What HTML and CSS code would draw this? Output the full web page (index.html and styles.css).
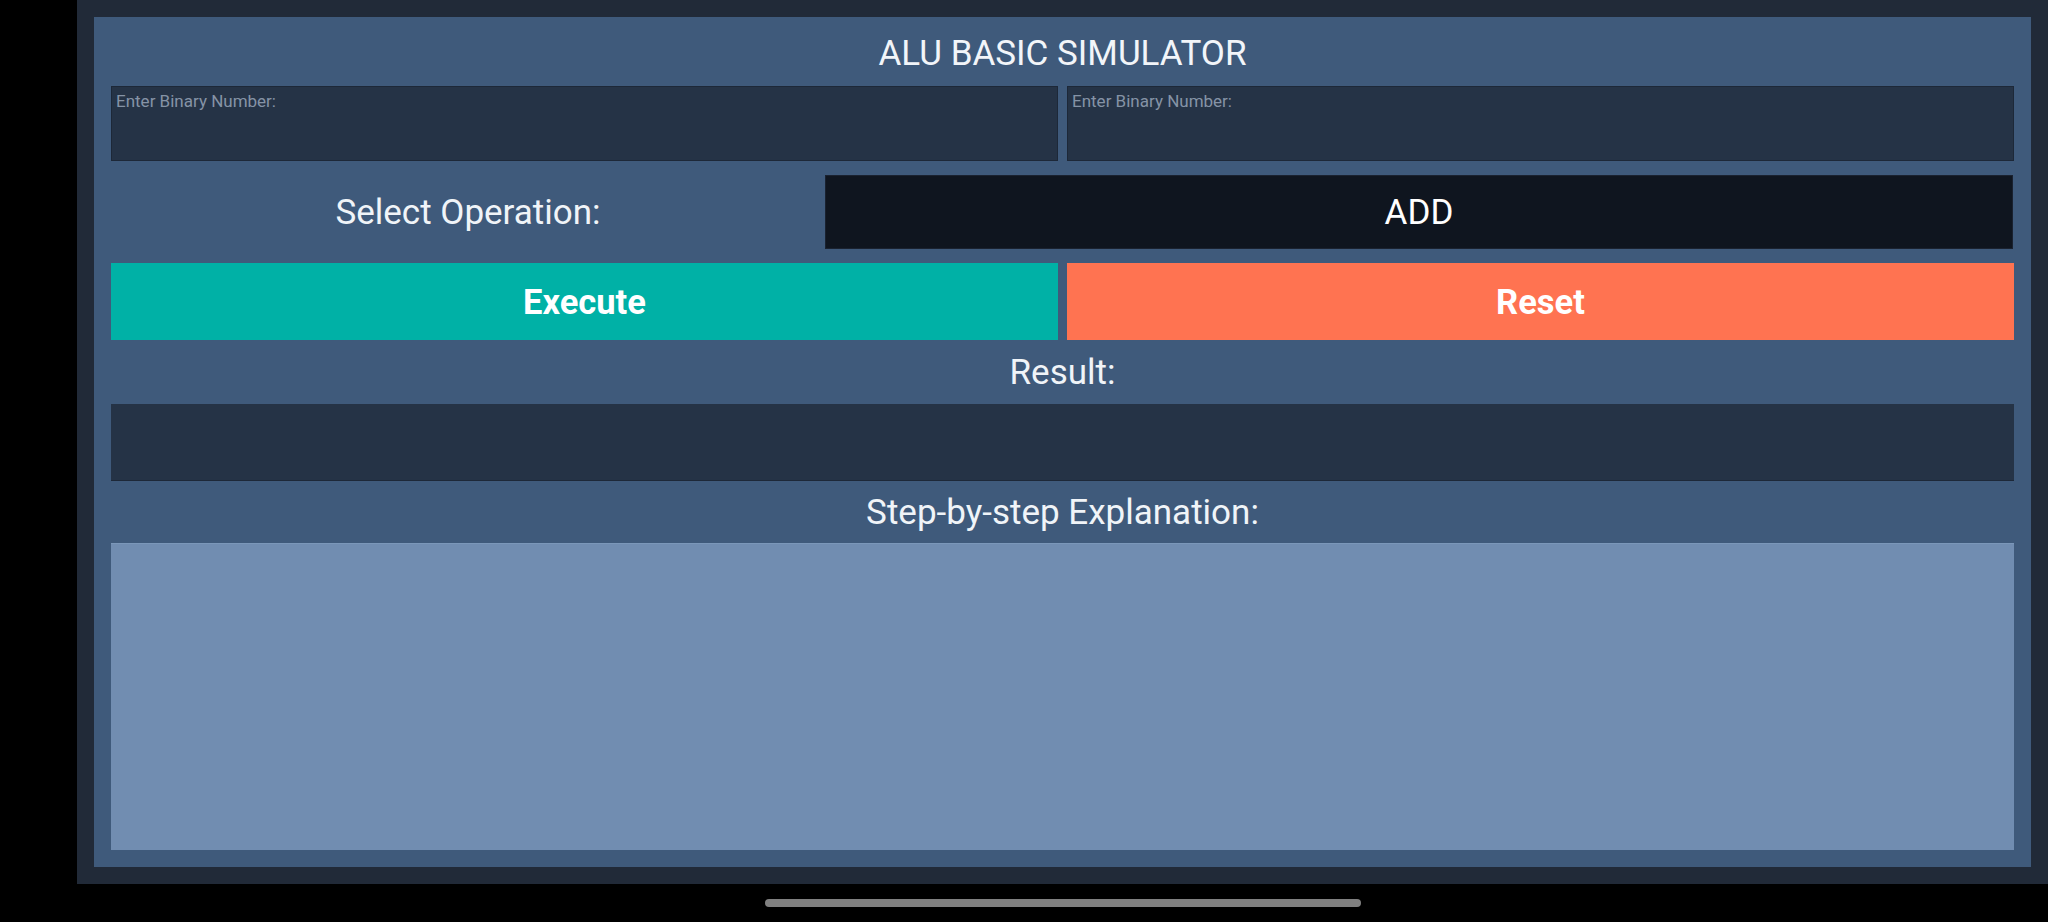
FILE: index.html
```html
<!DOCTYPE html>
<html>
<head>
<meta charset="utf-8">
<link rel="stylesheet" href="styles.css">
</head>
<body>
<div class="screen">
  <div class="frame">
    <div class="panel">
      <h1 class="title">ALU BASIC SIMULATOR</h1>
      <div class="inputs">
        <textarea class="bin" placeholder="Enter Binary Number:"></textarea>
        <textarea class="bin" placeholder="Enter Binary Number:"></textarea>
      </div>
      <div class="oprow">
        <div class="oplabel">Select Operation:</div>
        <div class="opselect">ADD</div>
      </div>
      <div class="buttons">
        <button class="btn exec">Execute</button>
        <button class="btn reset">Reset</button>
      </div>
      <div class="label">Result:</div>
      <div class="result"></div>
      <div class="label label-explain">Step-by-step Explanation:</div>
      <div class="explain"></div>
    </div>
  </div>
  <div class="navarea"><div class="homebar"></div></div>
</div>
</body>
</html>
```

FILE: styles.css
```css
html, body {
  margin: 0;
  padding: 0;
  background: #000;
  width: 2048px;
  height: 922px;
  overflow: hidden;
  font-family: Roboto, "Noto Sans", sans-serif;
}
.screen {
  display: flex;
  flex-direction: column;
  padding-left: 77px;
  height: 922px;
  box-sizing: border-box;
}
.frame {
  background: #212a38;
  height: 884px;
  padding: 17px;
  box-sizing: border-box;
}
.panel {
  background: #3f5a7b;
  height: 850px;
  padding: 0 17px 17px 17px;
  box-sizing: border-box;
  display: flex;
  flex-direction: column;
  color: #eef2f7;
}
.title {
  margin: 0;
  padding-top: 5px;
  height: 69px;
  box-sizing: border-box;
  line-height: 64px;
  font-size: 35px;
  font-weight: 400;
  text-align: center;
  color: #f2f5f9;
}
.inputs {
  display: flex;
  gap: 9px;
  height: 75px;
}
.bin {
  flex: 1;
  margin: 0;
  resize: none;
  background: #253346;
  border: 1px solid #1d2838;
  box-sizing: border-box;
  padding: 4px 4px;
  font-family: Roboto, "Noto Sans", sans-serif;
  font-size: 17px;
  color: #dde4ee;
  outline: none;
}
.bin::placeholder {
  color: #8593a6;
}
.oprow {
  display: flex;
  margin-top: 14px;
  height: 74px;
}
.oplabel {
  width: 714px;
  display: flex;
  align-items: center;
  justify-content: center;
  font-size: 35px;
  color: #f0f4f8;
}
.opselect {
  width: 1188px;
  background: #0f151f;
  display: flex;
  align-items: center;
  justify-content: center;
  font-size: 35px;
  color: #ffffff;
  border: 1px solid #1a2230;
  box-sizing: border-box;
}
.buttons {
  display: flex;
  gap: 9px;
  margin-top: 14px;
  height: 77px;
}
.btn {
  flex: 1;
  border: none;
  margin: 0;
  font-family: Roboto, "Noto Sans", sans-serif;
  font-weight: 700;
  font-size: 34.5px;
  color: #fff;
}
.exec { background: #00b1a6; }
.reset { background: #ff7351; }
.label {
  height: 64px;
  display: flex;
  align-items: center;
  justify-content: center;
  font-size: 35px;
  color: #f0f4f8;
}
.label-explain {
  height: 62px;
}
.result {
  height: 77px;
  background: #253346;
  border-bottom: 1px solid #1d2838;
  box-sizing: border-box;
}
.explain {
  flex: 1;
  background: #718db1;
  border-top: 1px solid #7b97b9;
}
.navarea {
  height: 38px;
  display: flex;
  justify-content: center;
}
.homebar {
  margin-top: 15px;
  width: 596px;
  height: 8px;
  border-radius: 4px;
  background: #808080;
}
```
